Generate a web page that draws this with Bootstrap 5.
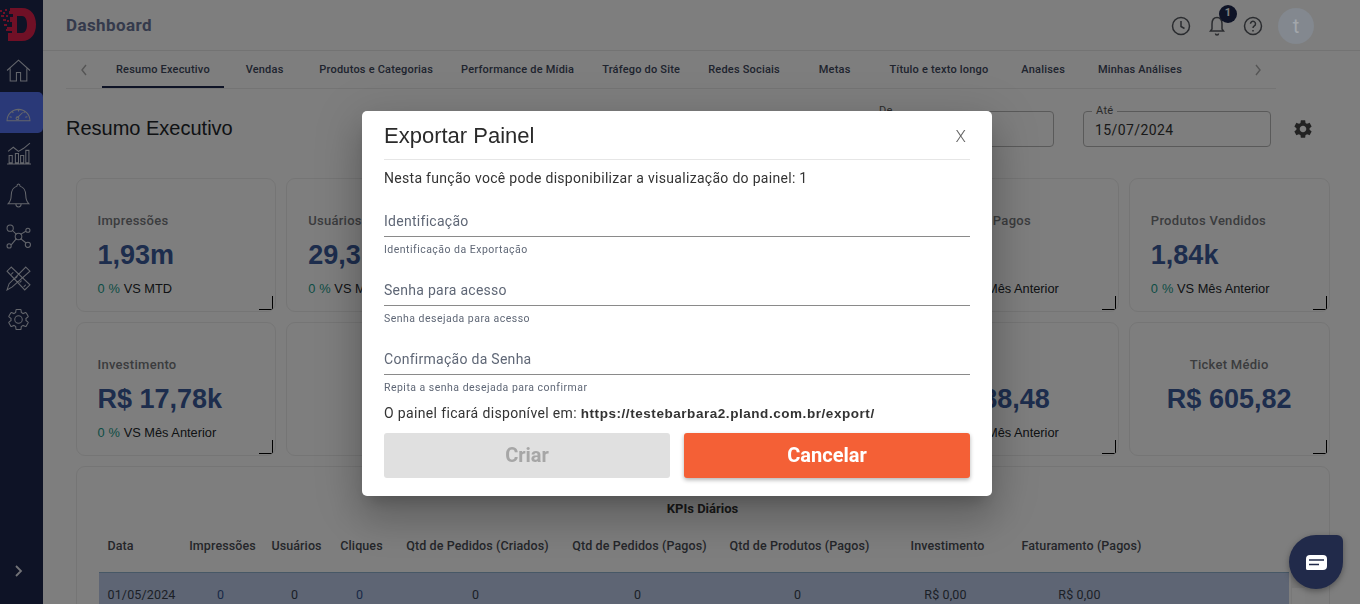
<!DOCTYPE html>
<html lang="pt-BR"><head><meta charset="utf-8"><title>Dashboard</title>
<link href="https://cdn.jsdelivr.net/npm/bootstrap@5.3.0/dist/css/bootstrap.min.css" rel="stylesheet">
<style>
html,body{height:604px;overflow:hidden}
body{font-family:Roboto,"Liberation Sans",sans-serif;background:#fcfcfc;color:#212529}
.shell{height:604px}
.side{width:43px;background:#1c264c;flex:none}
.side-logo{height:50px;padding:8px 0 0 0}
.side-item{height:41.5px;display:flex;align-items:center;padding-left:6px;border-radius:0 5px 5px 0}
.side-item svg{fill:none;stroke:#c8ccd8;stroke-width:1;width:25px;height:25px}
.side-on{background:#5572f0}
.side-end{margin-top:auto;height:66px;padding:0 0 0 14px;display:flex;align-items:center}
.top{height:51px;padding:1px 46px 0 23px;border-bottom:1px solid #e6e6e6}
.top-name{font-size:17px;font-weight:700;color:#6a7498;letter-spacing:.4px;margin:0}
.top-ic{width:20px;height:20px;fill:none;stroke:#55585f;stroke-width:1.5}
.ic-wrap{width:36px;display:flex;justify-content:center;position:relative}
.bell-n{position:absolute;top:-11px;right:-2px;width:18px;height:18px;border-radius:50%;background:#1c264c;color:#fff;font-size:11px;font-weight:700;display:flex;align-items:center;justify-content:center}
.ava{position:relative;z-index:1041;width:36px;height:36px;border-radius:50%;background:#83888f;color:#a2a6ab;font-size:20px;margin-left:7px;text-align:center;line-height:36px}
.tabsbar{margin:0 84px 0 23px;height:38px;border-bottom:1px solid #e9e9e9}
.chev{width:36px;flex:none;display:flex;justify-content:center}
.chev svg{width:8px;height:12px;fill:none;stroke:#aaa;stroke-width:1.4}
.tab-a{min-width:81.5px;padding:1px 14px 0;text-align:center;font-size:11px;font-weight:500;line-height:36px;height:37px;color:#40485c;letter-spacing:.2px;white-space:nowrap;text-decoration:none}
.tab-on{border-bottom:2px solid #1c264c;color:#40485c}
.tools{padding:0 40px 0 23px;height:79px}
.sec-title{font-family:"Liberation Sans",Arial,sans-serif;font-size:20px;font-weight:400;margin:-2px 0 0;color:#212529}
.date-box{position:relative;width:188px;height:36px;border:1px solid #b5b5b5;border-radius:4px;padding:8px 11px;font-size:14px;letter-spacing:.4px;color:#333;margin-right:29px}
.date-lab{position:absolute;top:-8px;left:8px;background:#fcfcfc;padding:0 4px;font-size:11px;line-height:13px;color:#555;letter-spacing:.3px}
.gear-i{width:22px;height:22px;fill:#444;margin-left:-8px;margin-right:6px}
.board{padding:10px 30.500px 0 32.500px;display:grid;grid-template-columns:repeat(6,1fr);gap:10.5px 10px}
.kpi{position:relative;height:133.5px;border:1px solid #ebebeb;border-radius:9px;background:#fdfdfd;padding:31px 21px 0;display:flex;flex-direction:column;white-space:nowrap;overflow:hidden}
.kpi-c{text-align:center;align-items:center}
.kpi-l{font-size:13px;font-weight:500;color:#77797d;letter-spacing:.28px;line-height:18px;margin-top:2px}
.kpi-v{font-family:"Liberation Sans",Arial,sans-serif;font-size:27px;font-weight:700;color:#3a5a9a;line-height:34px;margin-top:8px}
.kpi-s{font-family:"Liberation Sans",Arial,sans-serif;font-size:12.8px;color:#212529;line-height:18px;margin-top:8px}
.pct{color:#1a9b8a;font-weight:400;letter-spacing:.2px}
.kpi::after{content:"";position:absolute;right:2px;bottom:1px;width:14px;height:14px;border-right:1px solid #000;border-bottom:1px solid #000}
.wide{grid-column:1/-1;height:300px;padding:33px 22px 0;display:block}
.wide::after{display:none}
.wide-title{font-size:13px;font-weight:700;text-align:center;color:#333;line-height:18px;margin-bottom:17px}
.kpi-tbl{table-layout:fixed;width:1190px;font-size:12.5px;margin:0;border-collapse:collapse}
.kpi-tbl th{font-weight:500;color:#4a4d55;height:37px;line-height:22px;padding:0 0 0 4px;text-align:center;letter-spacing:.1px;vertical-align:top}
.kpi-tbl th:first-child,.kpi-tbl td:first-child{text-align:left;padding-left:9px}
.kpi-tbl td{background:#bccbe8;color:#39414f;height:46px;text-align:center;padding:0;letter-spacing:.15px;vertical-align:middle;border-top:1px solid #8fb0cc}
.kpi-tbl td.kpi-v2{color:#35528f}
.sbar{position:absolute;left:1214px;top:105px;width:14px;height:60px;background:#f1f1f1}
.sbar-th{position:absolute;left:1px;top:16px;width:13px;height:60px;background:#fff}
.cover{position:fixed;inset:0;background:rgba(0,0,0,.5);z-index:1040}
.pop{position:fixed;inset:0;z-index:1050;overflow:hidden}
.pop-box{width:630px;height:385px;margin:111px 0 0 362px;background:#fff;border-radius:5px;box-shadow:0 11px 15px -7px rgba(0,0,0,.2),0 24px 38px 3px rgba(0,0,0,.14),0 9px 46px 8px rgba(0,0,0,.12);padding:0 22px}
.pop-head{height:49px;padding-top:3px;border-bottom:1px solid #e6e6e6}
.pop-title{font-family:"Liberation Sans",Arial,sans-serif;font-size:22px;font-weight:400;margin:0;color:#2a2a2a}
.pop-x{background:none;border:0;padding:0;font-size:17px;font-weight:300;color:#666;margin-right:4px}
.pop-lead{font-size:14px;color:#333;line-height:20px;margin:8px 0 0;letter-spacing:.3px}
.fld{height:69px}
.fld-first{margin-top:16px}
.fld-in{height:33px;border-bottom:1px solid #8a8a8a;font-size:14px;line-height:35px;color:#5f6776;letter-spacing:.28px}
.fld-help{font-size:10.5px;line-height:14px;margin-top:6px;color:#5f6776;letter-spacing:.48px}
.pop-url{font-size:14px;line-height:20px;color:#333;margin:-8px 0 9px;letter-spacing:.35px}
.pop-url b{font-family:"Liberation Sans",Arial,sans-serif;font-weight:700;letter-spacing:.55px;font-size:13.5px}
.btn-criar,.btn-cancel{height:45px;font-size:20px;font-weight:700;border:0;border-radius:3px;width:286px;padding:0 0 2px}
.btn-criar:disabled{background:#e0e0e0;color:#a6a6a6;opacity:1}
.btn-cancel{background:#f46036;color:#fff;box-shadow:0 2px 4px rgba(0,0,0,.3)}
.chat{position:fixed;left:1289px;top:535px;width:54px;height:54px;background:#212a4a;border-radius:50% 6px 50% 50%;z-index:1060;box-shadow:0 2px 6px rgba(0,0,0,.35);display:flex;align-items:center;justify-content:center}
</style></head><body>
<div class="d-flex shell">
<nav class="side d-flex flex-column">
 <div class="side-logo"><svg width="37" height="34" viewBox="0 0 37 34"><path fill="#e0204c" fill-rule="evenodd" d="M10 0H22C31 0 36 7 36 16.500C36 26 31 33 22 33H8V25H12V23H7V19H12V14H10V9H13V6H9V3H10ZM17 8V25H22C25 25 27 22 27 16.500C27 11 25 8 22 8Z"/><path fill="#e0204c" d="M0 2h2v2H0zM3 4h2v2H3zM5 1h2v2H5zM1 7h3v2H1zM6 7h2v2H6zM3 11h3v2H3zM7 12h2v2H7zM4 16h3v2H4zM6 21h2v2H6z"/></svg></div>
 <div class="side-item"><svg viewBox="0 0 24 24"><path d="M1 12 12 2l11 10M4 10v12h6v-8h4v8h6V10"/></svg></div>
 <div class="side-item side-on"><svg viewBox="0 0 24 24"><path d="M1 20a11 11 0 0 1 22 0ZM12 9v2M6 11l1 1.500M18 11l-1 1.500M3.500 16l2 .5M20.500 16l-2 .5M11 17l5-5"/><circle cx="11" cy="17.500" r="1.300"/></svg></div>
 <div class="side-item"><svg viewBox="0 0 24 24"><path d="M1 22h23M3 21v-7h3v7ZM9 21v-9h3v9ZM14 21v-7h3v7ZM19 21V9h3v12ZM2 10l5-4 5 4 5-3 6-5"/></svg></div>
 <div class="side-item"><svg viewBox="0 0 24 24"><path d="M12 1c-1 0-1.500 1-1.500 2C6 4.500 5 8 5 12c0 4-1 6-3 8h20c-2-2-3-4-3-8 0-4-1-7.500-5.500-9 0-1-.5-2-1.500-2ZM9.500 20.500a2.500 2.500 0 0 0 5 0"/></svg></div>
 <div class="side-item"><svg viewBox="0 0 24 24"><circle cx="4" cy="4" r="3"/><circle cx="21" cy="6" r="2"/><circle cx="3" cy="21" r="2"/><circle cx="21" cy="20" r="2.500"/><circle cx="12" cy="12" r="3.200"/><path d="m6 6 4 4M19 7l-5 3M5 20l5-6M19 18l-5-4"/></svg></div>
 <div class="side-item"><svg viewBox="0 0 24 24"><path d="M5 1 1 5l17 18 5-5ZM5 8l2-2M9 12l2-2M13 16l2-2M17 20l2-2M19 1l4 4L6 20l-5 3 2-6Z"/></svg></div>
 <div class="side-item"><svg viewBox="0 0 24 24"><path d="M19.140 12.940c.04-.3.06-.61.06-.94 0-.32-.02-.64-.07-.94l2.030-1.580c.18-.14.23-.41.12-.61l-1.920-3.320c-.12-.22-.37-.29-.59-.22l-2.390.96c-.5-.38-1.030-.7-1.620-.94l-.36-2.540c-.04-.24-.24-.41-.48-.41h-3.840c-.24 0-.43.17-.47.41l-.36 2.540c-.59.24-1.130.57-1.620.94l-2.390-.96c-.22-.08-.47 0-.59.22L2.740 8.870c-.12.21-.08.47.12.61l2.030 1.580c-.05.3-.09.63-.09.94s.02.64.07.94l-2.030 1.580c-.18.14-.23.41-.12.61l1.920 3.320c.12.22.37.29.59.22l2.390-.96c.5.38 1.030.7 1.620.94l.36 2.540c.05.24.24.41.48.41h3.840c.24 0 .44-.17.47-.41l.36-2.540c.59-.24 1.130-.56 1.620-.94l2.390.96c.22.08.47 0 .59-.22l1.920-3.320c.12-.22.07-.47-.12-.61l-2.010-1.580zM12 15.600c-1.980 0-3.600-1.620-3.600-3.600s1.620-3.600 3.600-3.600 3.600 1.620 3.600 3.600-1.620 3.600-3.600 3.600z"/></svg></div>
 <div class="side-end"><svg width="9" height="12" viewBox="0 0 9 12"><path d="M2 1l5 5-5 5" fill="none" stroke="#e4e6ee" stroke-width="1.800"/></svg></div>
</nav>
<main class="flex-grow-1 overflow-hidden">
 <header class="top d-flex align-items-center justify-content-between">
  <h1 class="top-name">Dashboard</h1>
  <div class="d-flex align-items-center">
   <span class="ic-wrap"><svg class="top-ic" viewBox="0 0 20 20"><circle cx="10" cy="10" r="8.500"/><path d="M10 5v5.500l3.500 2"/></svg></span>
   <span class="ic-wrap"><svg class="top-ic" viewBox="0 0 20 20"><path d="M10 1.500C6.500 1.500 5 4.500 5 8v5l-1.500 2h13L15 13V8c0-3.500-1.500-6.500-5-6.500ZM8.500 17.500a1.500 1.500 0 0 0 3 0"/></svg><span class="bell-n">1</span></span>
   <span class="ic-wrap"><svg class="top-ic" viewBox="0 0 20 20"><circle cx="10" cy="10" r="8.500"/><path d="M7.500 7.800a2.500 2.500 0 1 1 3.800 2.100c-.9.6-1.300 1-1.300 2.100M10 14v1.500"/></svg></span>
   <span class="ava">t</span>
  </div>
 </header>
 <div class="tabsbar d-flex align-items-center">
  <span class="chev"><svg viewBox="0 0 8 12"><path d="M6 1 2 6l4 5"/></svg></span>
  <a class="tab-a tab-on" href="#">Resumo Executivo</a><a class="tab-a" href="#">Vendas</a><a class="tab-a" href="#">Produtos e Categorias</a><a class="tab-a" href="#">Performance de Mídia</a><a class="tab-a" href="#">Tráfego do Site</a><a class="tab-a" href="#">Redes Sociais</a><a class="tab-a" href="#">Metas</a><a class="tab-a" href="#">Título e texto longo</a><a class="tab-a" href="#">Analises</a><a class="tab-a" href="#">Minhas Análises</a>
  <span class="chev ms-auto"><svg viewBox="0 0 8 12"><path d="m2 1 4 5-4 5"/></svg></span>
 </div>
 <div class="tools d-flex align-items-center justify-content-between">
  <h2 class="sec-title">Resumo Executivo</h2>
  <div class="d-flex align-items-center">
   <div class="date-box"><span class="date-lab">De</span></div>
   <div class="date-box"><span class="date-lab">Até</span>15/07/2024</div>
   <svg class="gear-i" viewBox="0 0 24 24"><path d="M19.140 12.940c.04-.3.06-.61.06-.94 0-.32-.02-.64-.07-.94l2.030-1.580c.18-.14.23-.41.12-.61l-1.920-3.320c-.12-.22-.37-.29-.59-.22l-2.390.96c-.5-.38-1.030-.7-1.620-.94l-.36-2.540c-.04-.24-.24-.41-.48-.41h-3.840c-.24 0-.43.17-.47.41l-.36 2.540c-.59.24-1.130.57-1.620.94l-2.390-.96c-.22-.08-.47 0-.59.22L2.740 8.870c-.12.21-.08.47.12.61l2.030 1.580c-.05.3-.09.63-.09.94s.02.64.07.94l-2.030 1.580c-.18.14-.23.41-.12.61l1.920 3.320c.12.22.37.29.59.22l2.390-.96c.5.38 1.030.7 1.620.94l.36 2.540c.05.24.24.41.48.41h3.840c.24 0 .44-.17.47-.41l.36-2.540c.59-.24 1.130-.56 1.620-.94l2.390.96c.22.08.47 0 .59-.22l1.920-3.320c.12-.22.07-.47-.12-.61l-2.010-1.580zM12 15.600c-1.980 0-3.600-1.620-3.600-3.600s1.620-3.600 3.600-3.600 3.600 1.620 3.600 3.600-1.620 3.600-3.600 3.600z"/></svg>
  </div>
 </div>
 <section class="board">
  <div class="kpi"><div class="kpi-l">Impressões</div><div class="kpi-v">1,93m</div><div class="kpi-s"><span class="pct">0 %</span> VS MTD</div></div>
  <div class="kpi"><div class="kpi-l">Usuários</div><div class="kpi-v">29,3</div><div class="kpi-s"><span class="pct">0 %</span> VS M</div></div>
  <div class="kpi"></div>
  <div class="kpi"></div>
  <div class="kpi"><div class="kpi-l">Pedidos Pagos</div><div class="kpi-v">&nbsp;</div><div class="kpi-s"><span class="pct">0 %</span> VS Mês Anterior</div></div>
  <div class="kpi"><div class="kpi-l">Produtos Vendidos</div><div class="kpi-v">1,84k</div><div class="kpi-s"><span class="pct">0 %</span> VS Mês Anterior</div></div>
  <div class="kpi"><div class="kpi-l">Investimento</div><div class="kpi-v">R$ 17,78k</div><div class="kpi-s"><span class="pct">0 %</span> VS Mês Anterior</div></div>
  <div class="kpi kpi-c"></div>
  <div class="kpi kpi-c"></div>
  <div class="kpi"></div>
  <div class="kpi"><div class="kpi-l">&nbsp;</div><div class="kpi-v">R$ 88,48</div><div class="kpi-s"><span class="pct">0 %</span> VS Mês Anterior</div></div>
  <div class="kpi kpi-c"><div class="kpi-l">Ticket Médio</div><div class="kpi-v">R$ 605,82</div></div>
  <div class="kpi wide">
   <div class="wide-title">KPIs Diários</div>
   <table class="kpi-tbl">
    <colgroup><col style="width:81px"><col style="width:82px"><col style="width:66px"><col style="width:64px"><col style="width:168px"><col style="width:156px"><col style="width:164px"><col style="width:132px"><col style="width:136px"><col></colgroup>
    <thead><tr><th>Data</th><th>Impressões</th><th>Usuários</th><th>Cliques</th><th>Qtd de Pedidos (Criados)</th><th>Qtd de Pedidos (Pagos)</th><th>Qtd de Produtos (Pagos)</th><th>Investimento</th><th>Faturamento (Pagos)</th><th></th></tr></thead>
    <tbody><tr><td>01/05/2024</td><td class="kpi-v2">0</td><td>0</td><td class="kpi-v2">0</td><td>0</td><td>0</td><td>0</td><td>R$ 0,00</td><td>R$ 0,00</td><td></td></tr></tbody>
   </table>
   <div class="sbar"><div class="sbar-th"></div></div>
  </div>
 </section>
</main>
</div>
<div class="cover"></div>
<div class="pop">
 <div class="pop-box">
  <div class="pop-head d-flex align-items-center justify-content-between"><h5 class="pop-title">Exportar Painel</h5><button class="pop-x" type="button">X</button></div>
  <p class="pop-lead">Nesta função você pode disponibilizar a visualização do painel: 1</p>
  <div class="fld fld-first"><div class="fld-in">Identificação</div><div class="fld-help">Identificação da Exportação</div></div>
  <div class="fld"><div class="fld-in">Senha para acesso</div><div class="fld-help">Senha desejada para acesso</div></div>
  <div class="fld"><div class="fld-in">Confirmação da Senha</div><div class="fld-help">Repita a senha desejada para confirmar</div></div>
  <p class="pop-url">O painel ficará disponível em: <b>https://testebarbara2.pland.com.br/export/</b></p>
  <div class="d-flex justify-content-between"><button class="btn btn-criar" type="button" disabled>Criar</button><button class="btn btn-cancel" type="button">Cancelar</button></div>
 </div>
</div>
<div class="chat"><svg width="21" height="15" viewBox="0 0 21 15"><path fill="#fff" d="M4 0h13a4 4 0 0 1 4 4v7a4 4 0 0 1-4 4H1.500A1.500 1.500 0 0 1 0 13.500V4a4 4 0 0 1 4-4Z"/><path stroke="#212a4a" stroke-width="1.500" d="M3 5h15M3 9.500h10"/></svg></div>
<script src="https://cdn.jsdelivr.net/npm/bootstrap@5.3.0/dist/js/bootstrap.bundle.min.js"></script>
</body></html>
